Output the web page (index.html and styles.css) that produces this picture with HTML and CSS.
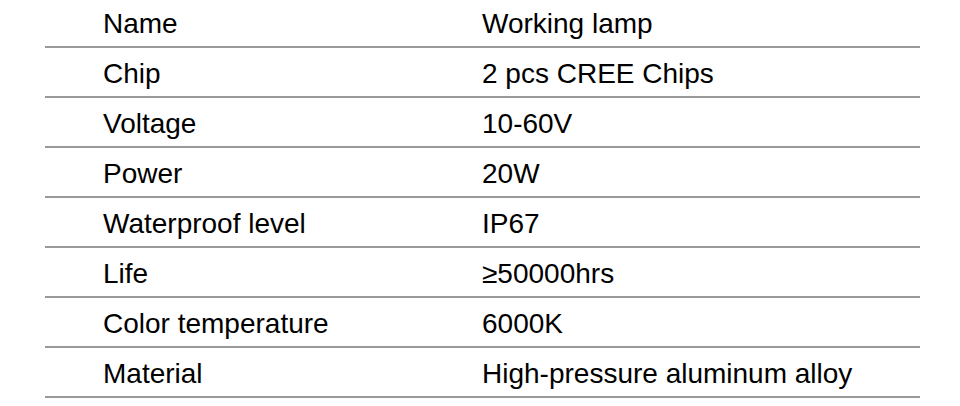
FILE: index.html
```html
<!DOCTYPE html>
<html>
<head>
<meta charset="utf-8">
<link rel="stylesheet" href="styles.css">
</head>
<body>
<div class="spec">
  <div class="row"><div class="key">Name</div><div class="val">Working lamp</div></div>
  <div class="row"><div class="key">Chip</div><div class="val">2 pcs CREE Chips</div></div>
  <div class="row"><div class="key">Voltage</div><div class="val">10-60V</div></div>
  <div class="row"><div class="key">Power</div><div class="val">20W</div></div>
  <div class="row"><div class="key">Waterproof level</div><div class="val">IP67</div></div>
  <div class="row"><div class="key">Life</div><div class="val">≥50000hrs</div></div>
  <div class="row"><div class="key">Color temperature</div><div class="val">6000K</div></div>
  <div class="row"><div class="key">Material</div><div class="val">High-pressure aluminum alloy</div></div>
</div>
</body>
</html>
```
FILE: styles.css
```css
html, body {
  margin: 0;
  padding: 0;
  background: #ffffff;
}
.spec {
  margin-top: -2px;
  margin-left: 45px;
  width: 875px;
  font-family: "Liberation Sans", Arial, sans-serif;
  font-size: 28px;
  color: #000;
}
.row {
  display: grid;
  grid-template-columns: 437px 1fr;
  align-items: center;
  height: 48px;
  border-bottom: 2px solid #999999;
}
.key {
  padding-top: 3px;
  padding-left: 58px;
}
.val {
  padding-top: 3px;
}
```
